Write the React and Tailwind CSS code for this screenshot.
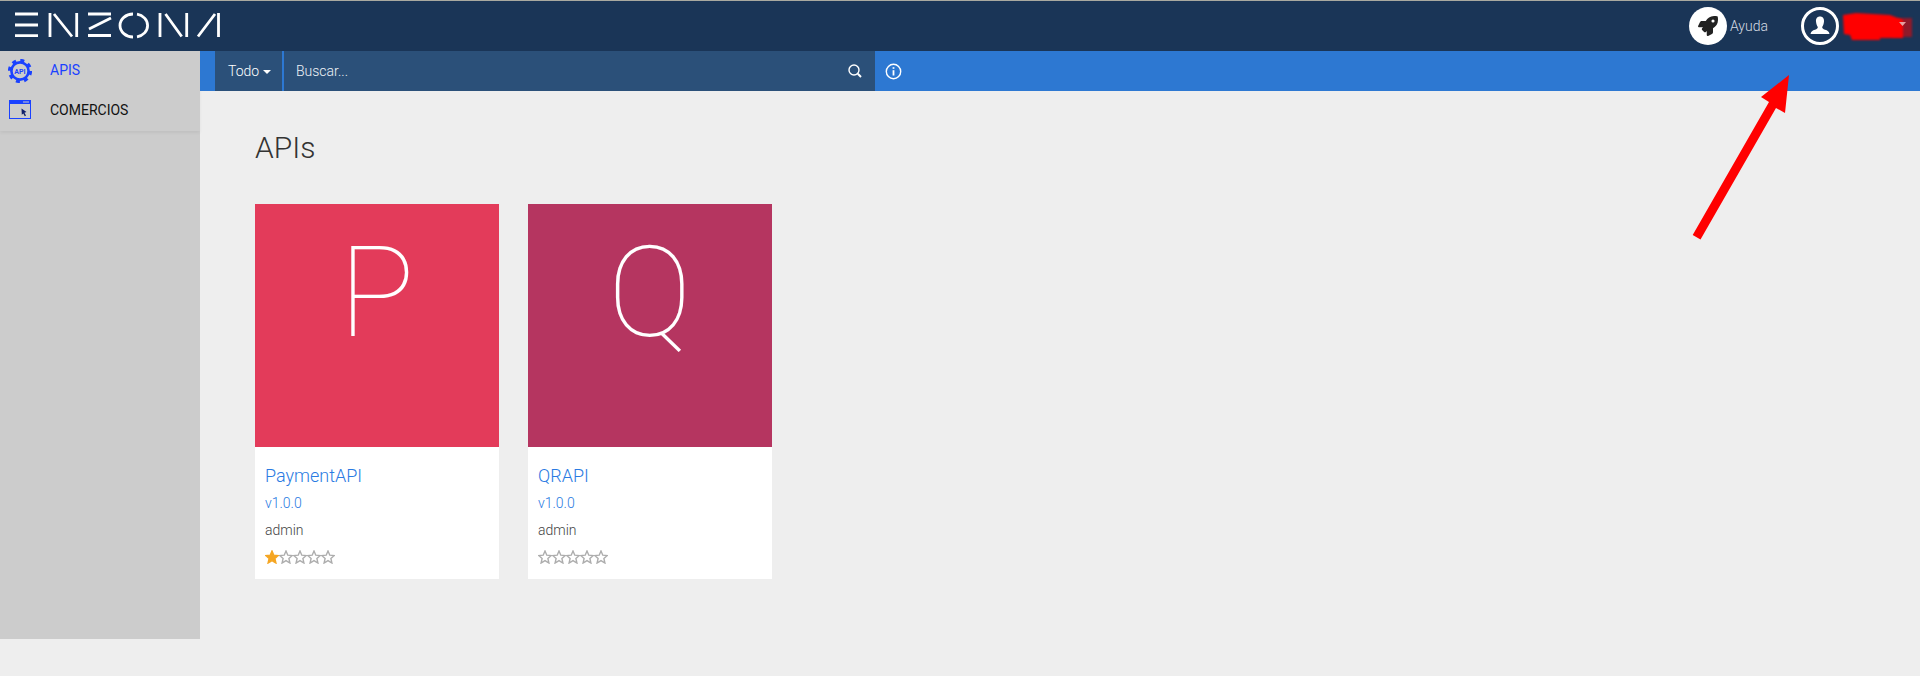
import { FaRocket } from 'react-icons/fa'

const apis = [
  { letra: 'P', nombre: 'PaymentAPI', color: 'bg-[#e33b5a]', estrellas: 1 },
  { letra: 'Q', nombre: 'QRAPI', color: 'bg-[#b53560]', estrellas: 0 },
]

function Logo() {
  return (
    <svg width="210" height="30" viewBox="0 0 210 30" fill="none" stroke="white" strokeWidth="2.8">
      {/* E */}
      <path d="M0 3H23M0 14H23M0 24.7H23" />
      {/* N */}
      <path d="M35 2V26M39 3L57 25.5M61.7 2V26" />
      {/* Z */}
      <path d="M73 3H96M96 7L74 18M73 24.5H96" />
      {/* O */}
      <path d="M118 3A13 11.5 0 0 0 118 26M122 3.2A13 11.5 0 0 1 122 25.8" />
      {/* N */}
      <path d="M145 2V26M150.5 3L166.7 25.5M171.7 2V26" />
      {/* A */}
      <path d="M183 25.5L200 3M203.5 2V26" />
    </svg>
  )
}

function IconoApi() {
  return (
    <svg width="24" height="24" viewBox="0 0 24 24" className="text-[#1a41ff]">
      <circle cx="12" cy="12" r="8.6" fill="none" stroke="currentColor" strokeWidth="2.6" />
      <circle cx="12" cy="12" r="10.6" fill="none" stroke="currentColor" strokeWidth="3" strokeDasharray="4 4.32" />
      <text x="12" y="14.6" textAnchor="middle" fontSize="7" fontWeight="700" fill="currentColor" fontFamily="Roboto, sans-serif">API</text>
    </svg>
  )
}

function IconoComercios() {
  return (
    <svg width="22" height="20" viewBox="0 0 22 20" fill="none" className="text-[#1a41ff]">
      <rect x="0.5" y="0.5" width="21" height="18" stroke="currentColor" />
      <rect x="0" y="0" width="22" height="4" fill="currentColor" />
      <path d="M15 3V1M17 3V1M19 3V1" stroke="#ccc" />
      <path d="M12.5 8.5L17.5 12L15.4 12.8L17 15.5L15.8 16.2L14.3 13.4L12.8 14.8Z" fill="#10206a" />
    </svg>
  )
}

function Estrella({ llena }) {
  const puntos = '7,1 8.8,5.2 13.2,5.6 9.9,8.5 10.9,13 7,10.6 3.1,13 4.1,8.5 0.8,5.6 5.2,5.2'
  return (
    <svg width="14" height="14" viewBox="0 0 14 14">
      <polygon points={puntos} fill={llena ? '#f5a623' : 'white'} stroke={llena ? '#f5a623' : '#adadad'} strokeWidth="1.4" />
    </svg>
  )
}

function Tarjeta({ api }) {
  return (
    <div className="w-[243.5px] bg-white">
      <div className={`h-[243px] ${api.color} flex justify-center text-white text-[126px] leading-[178px] font-thin`}>
        {api.letra}
      </div>
      <div className="h-[132px] pt-[19px] pl-[10px]">
        <div className="text-[18px] leading-[20px] font-light text-[#2a7ae2]">{api.nombre}</div>
        <div className="mt-[8px] text-[14px] leading-[18px] font-light text-[#2a7ae2]">v1.0.0</div>
        <div className="mt-[9px] text-[14px] leading-[18px] font-light text-[#444]">admin</div>
        <div className="mt-[11px] flex">
          {[1, 2, 3, 4, 5].map((n) => (
            <Estrella key={n} llena={n <= api.estrellas} />
          ))}
        </div>
      </div>
    </div>
  )
}

export default function App() {
  return (
    <div className="relative h-[676px] w-[1920px] overflow-hidden bg-[#eeeeee] font-['Roboto',sans-serif]">
      {/* Barra superior */}
      <header className="h-[51px] border-t border-[#a9a9a0] bg-[#1a3557] flex items-center pl-[15px] pr-[8px]">
        <Logo />
        <div className="ml-auto flex items-center">
          <div className="w-[38px] h-[38px] rounded-full bg-white flex items-center justify-center text-[#222]">
            <FaRocket size={20} />
          </div>
          <span className="ml-[3px] text-[14px] font-light text-[#d5dbe3]">Ayuda</span>
          <div className="ml-[33px] w-[38px] h-[38px] rounded-full border-[3px] border-white flex items-center justify-center">
            <svg width="20" height="20" viewBox="0 0 20 20" fill="white">
              <path d="M10 0.5C7 0.5 5.8 2.8 6 5.5C6.2 8 7 10 7.8 11C7.8 12.4 7 13 5 13.7C2.5 14.5 1 15.2 0.5 18H19.5C19 15.2 17.5 14.5 15 13.7C13 13 12.2 12.4 12.2 11C13 10 13.8 8 14 5.5C14.2 2.8 13 0.5 10 0.5Z" />
            </svg>
          </div>
          <div className="w-[73px]" />
        </div>
      </header>

      <div className="flex items-start">
        {/* Menu lateral */}
        <aside className="w-[200px] h-[588px] shrink-0 bg-[#cccccc]">
          <div className="h-[80px] shadow-[0_2px_3px_rgba(0,0,0,0.06)]">
            <div className="h-[39px] flex items-center pl-[8px] text-[14px] text-[#1a41ff]">
              <IconoApi />
              <span className="ml-[18px]">APIS</span>
            </div>
            <div className="h-[40px] flex items-center pl-[9px] text-[14px] text-[#111]">
              <IconoComercios />
              <span className="ml-[19px]">COMERCIOS</span>
            </div>
          </div>
        </aside>

        <main className="flex-1">
          {/* Buscador */}
          <div className="h-[40px] bg-[#2d78d2] pl-[15px] flex items-center text-white">
            <div className="w-[660px] h-full bg-[#2b5079] flex items-center text-[14px]">
              <div className="w-[67px] h-full flex items-center pl-[13px] font-light">
                Todo
                <span className="ml-[4px] mt-[2px] border-x-[4px] border-t-[4px] border-x-transparent border-t-white" />
              </div>
              <div className="w-[2px] h-full bg-[#2d78d2]" />
              <span className="ml-[12px] font-light text-[#eef2f7]">Buscar...</span>
              <svg className="ml-auto mr-[12px]" width="16" height="16" viewBox="0 0 16 16" fill="none" stroke="white">
                <circle cx="7" cy="7" r="5" strokeWidth="1.4" />
                <path d="M10.8 10.8L14 14" strokeWidth="2" />
              </svg>
            </div>
            <svg className="ml-[10px]" width="17" height="17" viewBox="0 0 17 17" fill="none" stroke="white">
              <circle cx="8.5" cy="8.5" r="7.2" strokeWidth="1.4" />
              <path d="M8.5 7.2V12.5" strokeWidth="1.8" />
              <path d="M8.5 4.2V5.8" strokeWidth="1.8" />
            </svg>
          </div>

          <div className="pl-[55px]">
            <h1 className="mt-[39px] text-[30px] leading-[36px] font-light text-[#333]">APIs</h1>
            <div className="mt-[38px] flex gap-[29.5px]">
              {apis.map((api) => (
                <Tarjeta key={api.nombre} api={api} />
              ))}
            </div>
          </div>
        </main>
      </div>

      {/* Anotaciones a mano encima de la captura */}
      <svg className="absolute left-0 top-0 pointer-events-none" width="1920" height="676" fill="none">
        <path d="M1692.7 235L1769 102L1761 97L1789 75L1785 113L1776 108L1700.5 239.5Z" fill="#ff0000" />
        <path d="M1898 18H1912V37H1892Z" fill="#8f1a2a" className="blur-[1px]" />
        <path d="M1843 15L1856 13L1890 15L1903 20V38L1880 38L1880 40L1852 40L1850 35L1844 34Z" fill="#ff0000" className="blur-[1px]" />
        <path d="M1899 22H1906L1902.5 26Z" fill="#e8a0a0" />
      </svg>
    </div>
  )
}
